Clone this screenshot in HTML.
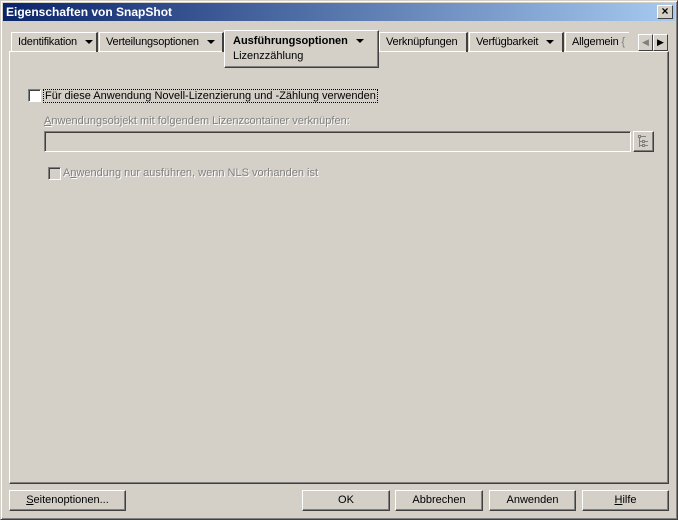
<!DOCTYPE html>
<html><head><style>
*{box-sizing:border-box;margin:0;padding:0}
body{width:678px;height:520px;background:#d4d0c8;font-family:"Liberation Sans",Arial,sans-serif;font-size:11px;color:#000;position:relative;overflow:hidden}
.abs{position:absolute}
.win{left:0;top:0;width:678px;height:520px;border:1px solid;border-color:#d4d0c8 #404040 #404040 #d4d0c8;box-shadow:inset 1px 1px 0 #fff,inset -1px -1px 0 #808080}
.title{left:3px;top:3px;width:672px;height:18px;background:linear-gradient(90deg,#0a246a,#a6caf0);color:#fff;font-weight:bold;font-size:12px;padding:2px 0 0 3px}
.xb{right:5px;top:5px;width:16px;height:14px;background:#d4d0c8;border:1px solid;border-color:#fff #404040 #404040 #fff;font-size:12px;font-weight:bold;text-align:center;line-height:11px;color:#000}
.tab{top:32px;height:20px;border-top:1px solid #fff;border-left:1px solid #fff;border-right:2px solid #404040;padding:3px 0 0 6px;white-space:nowrap;overflow:hidden;letter-spacing:-0.2px}
.arr{display:inline-block;width:0;height:0;border-left:4px solid transparent;border-right:4px solid transparent;border-top:4px solid #000;margin-left:8px;vertical-align:middle}
.panel{left:9px;top:51px;width:660px;height:433px;border:1px solid;border-color:#fff #404040 #404040 #fff;box-shadow:inset -1px -1px 0 #808080}
.btn{top:490px;height:21px;border:1px solid;border-color:#fff #404040 #404040 #fff;box-shadow:inset -1px -1px 0 #808080;text-align:center;line-height:19px}
.cb{width:13px;height:13px;border:1px solid;border-color:#808080 #fff #fff #808080;box-shadow:inset 1px 1px 0 #404040;background:#fff}
</style></head><body>
<div class="abs win"></div>
<div class="abs title">Eigenschaften von SnapShot</div>
<div class="abs xb">×</div>
<div class="abs panel"></div>
<div class="abs tab" style="left:11px;width:87px">Identifikation<span class="arr"></span></div>
<div class="abs tab" style="left:99px;width:125px">Verteilungsoptionen<span class="arr"></span></div>
<div class="abs tab" style="left:379px;width:89px">Verknüpfungen</div>
<div class="abs tab" style="left:469px;width:95px">Verfügbarkeit<span class="arr"></span></div>
<div class="abs tab" style="left:565px;width:64px;border-right:none">Allgemein <span style="color:#808080">{</span></div>
<div class="abs" style="left:224px;top:30px;width:155px;height:38px;background:#d4d0c8;border:1px solid;border-color:#fff #404040 #404040 #fff;box-shadow:inset -1px -1px 0 #808080;padding:3px 0 0 8px;line-height:15px"><b>Ausführungsoptionen</b><span class="arr"></span><br>Lizenzzählung</div>
<div class="abs" style="left:638px;top:34px;width:15px;height:17px;border:1px solid;border-color:#fff #404040 #404040 #fff;color:#808080;font-size:9px;text-align:center;line-height:15px">◀</div>
<div class="abs" style="left:653px;top:34px;width:15px;height:17px;border:1px solid;border-color:#fff #404040 #404040 #fff;font-size:9px;text-align:center;line-height:15px">▶</div>
<div class="abs cb" style="left:28px;top:89px"></div>
<div class="abs" style="left:43px;top:89px;border:1px dotted #000;padding:0 1px;line-height:12px">Für diese Anwendung Novell-Lizenzierung und -Zählung verwenden</div>
<div class="abs" style="left:44px;top:115px;color:#808080;text-shadow:1px 1px 0 #fff"><u>A</u>nwendungsobjekt mit folgendem Lizenzcontainer verknüpfen:</div>
<div class="abs" style="left:44px;top:131px;width:587px;height:21px;border:1px solid;border-color:#808080 #fff #fff #808080;box-shadow:inset 1px 1px 0 #404040"></div>
<div class="abs" style="left:633px;top:131px;width:21px;height:21px;border:1px solid;border-color:#fff #404040 #404040 #fff;box-shadow:inset -1px -1px 0 #808080">
<svg width="19" height="19" viewBox="0 0 19 19" style="position:absolute;left:0;top:0;display:block"><g fill="none" stroke="#808080"><rect x="4.5" y="3.5" width="2" height="2"/><path d="M7 4.5h5M5.5 6v9M5.5 9.5h3M5.5 13.5h3"/><rect x="8.5" y="8.5" width="2" height="2"/><rect x="8.5" y="12.5" width="2" height="2"/><path d="M11 9.5h3M11 13.5h3"/></g></svg></div>
<div class="abs cb" style="left:48px;top:167px;background:#d4d0c8"></div>
<div class="abs" style="left:63px;top:167px;color:#808080;text-shadow:1px 1px 0 #fff">A<u>n</u>wendung nur ausführen, wenn NLS vorhanden ist</div>
<div class="abs btn" style="left:9px;width:117px"><u>S</u>eitenoptionen...</div>
<div class="abs btn" style="left:302px;width:88px">OK</div>
<div class="abs btn" style="left:395px;width:88px">Abbrechen</div>
<div class="abs btn" style="left:489px;width:87px">Anwenden</div>
<div class="abs btn" style="left:582px;width:87px"><u>H</u>ilfe</div>
</body></html>
